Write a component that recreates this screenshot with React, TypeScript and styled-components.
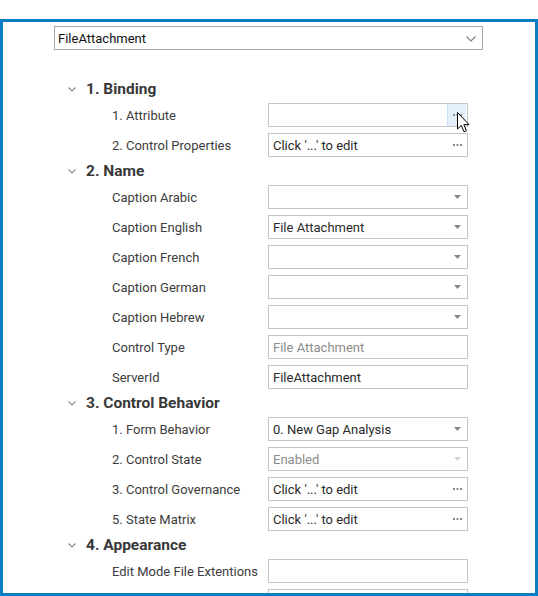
import { FC } from "react"
import styled, { createGlobalStyle } from "styled-components"

type Kind = 'select' | 'ellipsis' | 'text'

type PropT = {
  label: string
  kind: Kind
  value?: string
  disabled?: boolean
  hover?: boolean
}

type SectionT = {
  title: string
  props: PropT[]
}

const CLICK = "Click '...' to edit"

const sections: SectionT[] = [
  {
    title: '1. Binding',
    props: [
      { label: '1. Attribute', kind: 'ellipsis', hover: true },
      { label: '2. Control Properties', kind: 'ellipsis', value: CLICK },
    ],
  },
  {
    title: '2. Name',
    props: [
      { label: 'Caption Arabic', kind: 'select' },
      { label: 'Caption English', kind: 'select', value: 'File Attachment' },
      { label: 'Caption French', kind: 'select' },
      { label: 'Caption German', kind: 'select' },
      { label: 'Caption Hebrew', kind: 'select' },
      { label: 'Control Type', kind: 'text', value: 'File Attachment', disabled: true },
      { label: 'ServerId', kind: 'text', value: 'FileAttachment' },
    ],
  },
  {
    title: '3. Control Behavior',
    props: [
      { label: '1. Form Behavior', kind: 'select', value: '0. New Gap Analysis' },
      { label: '2. Control State', kind: 'select', value: 'Enabled', disabled: true },
      { label: '3. Control Governance', kind: 'ellipsis', value: CLICK },
      { label: '5. State Matrix', kind: 'ellipsis', value: CLICK },
    ],
  },
  {
    title: '4. Appearance',
    props: [
      { label: 'Edit Mode File Extentions', kind: 'text' },
      // next row is cut off by the frame, only its box top shows
      { label: '', kind: 'text' },
    ],
  },
]

export default function App() {
  return (
    <>
      <GlobalStyle />
      <Page>
        <Frame>
          <TopSelect>
            <span>FileAttachment</span>
            <svg width="10" height="6" viewBox="0 0 10 6">
              <polyline points="0.5,0.5 5,5 9.5,0.5" fill="none" stroke="#7d7d7d" strokeWidth="1.1" />
            </svg>
          </TopSelect>
          <Grid>
            {sections.map(s => (
              <div key={s.title}>
                <SectionHeader>
                  <svg width="8" height="5" viewBox="0 0 8 5">
                    <polyline points="0.5,0.5 4,4 7.5,0.5" fill="none" stroke="#8a8a8a" strokeWidth="1.1" />
                  </svg>
                  <span>{s.title}</span>
                </SectionHeader>
                {s.props.map((p, i) => <PropRow key={i} {...p} />)}
              </div>
            ))}
          </Grid>
        </Frame>
      </Page>
    </>
  )
}

const Dots: FC = () => (
  <svg width="9" height="2" viewBox="0 0 9 2">
    <rect x="0" y="0" width="2" height="2" fill="#8a8a8a" />
    <rect x="3.5" y="0" width="2" height="2" fill="#8a8a8a" />
    <rect x="7" y="0" width="2" height="2" fill="#8a8a8a" />
  </svg>
)

const PropRow: FC<PropT> = ({ label, kind, value = '', disabled, hover }) => {
  return (
    <Row>
      <Label>{label}</Label>
      <Box>
        <Value $disabled={disabled}>{value}</Value>
        {kind === 'select' && (
          <Side>
            <svg width="7" height="4" viewBox="0 0 7 4">
              <polygon points="0,0 7,0 3.5,4" fill={disabled ? '#d2d2d2' : '#868686'} />
            </svg>
          </Side>
        )}
        {kind === 'ellipsis' && (
          <Side $hover={hover}>
            <Dots />
            {hover && (
              <Cursor width="13" height="21" viewBox="0 0 13 21">
                <path
                  d="M0.5,0.5 L0.5,17 L4.3,13.4 L7,19.8 L9.4,18.8 L6.8,12.6 L12,12.6 Z"
                  fill="#fff"
                  stroke="#000"
                  strokeWidth="1"
                />
              </Cursor>
            )}
          </Side>
        )}
      </Box>
    </Row>
  )
}

const GlobalStyle = createGlobalStyle`
  html, body {
    margin: 0;
    padding: 0;
    background: #fff;
  }
  body {
    font-family: Roboto, "Noto Sans", sans-serif;
    color: #333;
  }
`

const Page = styled.div`
  padding-top: 19px;
`

const Frame = styled.div`
  box-sizing: border-box;
  width: 538px;
  height: 577px;
  border: 3px solid #0b7dc5;
  background: #fff;
  overflow: hidden;
  padding: 4px 0 0 51px;
`

const TopSelect = styled.div`
  box-sizing: border-box;
  width: 429px;
  height: 24px;
  border: 1px solid #a6a6a6;
  display: flex;
  align-items: center;
  justify-content: space-between;
  padding: 0 6px 0 3px;
  font-size: 13px;
  color: #111;
  svg {
    margin-top: 1px;
  }
`

const Grid = styled.div`
  margin-top: 28px;
  margin-left: 14px;
`

const SectionHeader = styled.div`
  height: 22px;
  display: flex;
  align-items: center;
  gap: 10px;
  font-size: 15.5px;
  font-weight: 700;
  color: #383838;
  svg {
    flex: none;
  }
`

const Row = styled.div`
  height: 30px;
  display: grid;
  grid-template-columns: 156px 200px;
  align-items: center;
  padding-left: 44px;
`

const Label = styled.span`
  font-size: 13px;
  color: #3c3c3c;
  white-space: nowrap;
`

const Box = styled.div`
  box-sizing: border-box;
  height: 24px;
  border: 1px solid #c4c4c4;
  display: flex;
  align-items: center;
  padding-left: 4px;
  background: #fff;
`

const Value = styled.span<{ $disabled?: boolean }>`
  flex: 1;
  font-size: 13px;
  color: ${p => (p.$disabled ? '#8c8c8c' : '#2a2a2a')};
  white-space: nowrap;
  overflow: hidden;
`

const Side = styled.div<{ $hover?: boolean }>`
  position: relative;
  box-sizing: border-box;
  width: 19px;
  height: 22px;
  display: flex;
  align-items: center;
  justify-content: center;
  margin-right: 1px;
  background: ${p => (p.$hover ? '#e3effa' : 'transparent')};
  border-left: 1px solid ${p => (p.$hover ? '#c9def2' : 'transparent')};
`

const Cursor = styled.svg`
  position: absolute;
  left: 9px;
  top: 8px;
  z-index: 2;
`
